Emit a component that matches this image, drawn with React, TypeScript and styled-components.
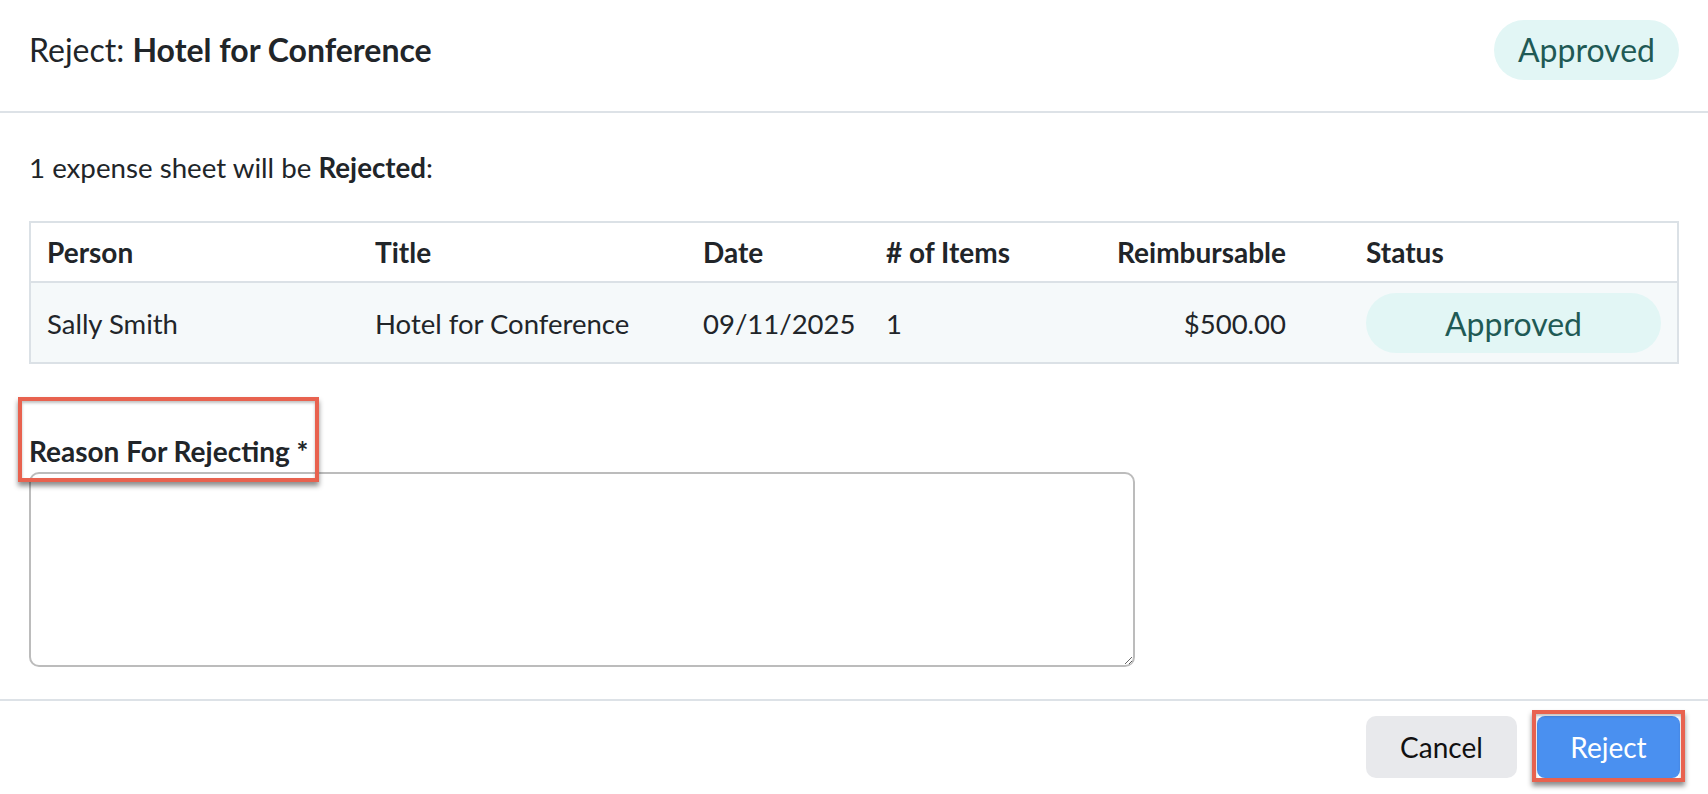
import React from "react";
import styled, { createGlobalStyle } from "styled-components";

const GlobalStyle = createGlobalStyle`
  html, body { margin: 0; padding: 0; background: #ffffff; }
  body {
    font-family: Lato, "Noto Sans", "Liberation Sans", sans-serif;
    color: #212529;
    -webkit-font-smoothing: antialiased;
  }
  * { box-sizing: border-box; }
`;

const Page = styled.div`
  width: 1708px;
  min-height: 794px;
  display: flex;
  flex-direction: column;
  background: #ffffff;
`;

const Header = styled.header`
  height: 113px;
  padding: 0 29px 12px;
  display: flex;
  align-items: center;
  justify-content: space-between;
  border-bottom: 2px solid #dde2e7;
`;

const Title = styled.h1`
  margin: 0;
  font-size: 32px;
  font-weight: 400;
  line-height: 40px;
  color: #212529;
  strong { font-weight: 700; }
`;

const Pill = styled.span<{ $block?: boolean }>`
  display: ${(p) => (p.$block ? "flex" : "inline-flex")};
  align-items: center;
  justify-content: center;
  height: 60px;
  padding: 0 24px;
  border-radius: 30px;
  background: #e2f6f5;
  color: #1f5a55;
  font-size: 32px;
  font-weight: 400;
  width: ${(p) => (p.$block ? "100%" : "auto")};
`;

const Body = styled.main`
  padding: 37px 29px 0;
`;

const Summary = styled.p`
  margin: 0;
  font-size: 27.7px;
  line-height: 36px;
  strong { font-weight: 700; }
`;

const Table = styled.table`
  margin-top: 35px;
  width: 1650px;
  table-layout: fixed;
  border-collapse: separate;
  border-spacing: 0;
  border: 2px solid #dbe1e6;
  font-size: 28px;
`;

const Th = styled.th<{ $align?: string; $pl?: number; $pr?: number }>`
  height: 60px;
  padding: 0 ${(p) => p.$pr ?? 16}px 0 ${(p) => p.$pl ?? 16}px;
  text-align: ${(p) => p.$align ?? "left"};
  font-weight: 700;
  border-bottom: 2px solid #dbe1e6;
  background: #ffffff;
  white-space: nowrap;
`;

const Td = styled.td<{ $align?: string; $pl?: number; $pr?: number }>`
  height: 79px;
  padding: 10px ${(p) => p.$pr ?? 16}px 9px ${(p) => p.$pl ?? 16}px;
  text-align: ${(p) => p.$align ?? "left"};
  background: #f5f9fa;
  white-space: nowrap;
  font-size: 27.5px;
`;

const Field = styled.div`
  margin-top: 69px;
`;

const LabelWrap = styled.div`
  position: relative;
  display: inline-block;
`;

const Label = styled.label`
  display: block;
  font-size: 28px;
  line-height: 36px;
  font-weight: 700;
`;

const Annotation = styled.span<{ $t: number; $r: number; $b: number; $l: number }>`
  position: absolute;
  top: ${(p) => p.$t}px;
  right: ${(p) => p.$r}px;
  bottom: ${(p) => p.$b}px;
  left: ${(p) => p.$l}px;
  border: 4px solid #e8624f;
  box-shadow: 0 4px 5px rgba(0, 0, 0, 0.45), inset 0 2px 3px rgba(0, 0, 0, 0.25);
  pointer-events: none;
`;

const TextArea = styled.textarea`
  display: block;
  margin-top: 3px;
  width: 1106px;
  height: 195px;
  border: 2px solid #bcbcbc;
  border-radius: 10px;
  resize: vertical;
  font-family: inherit;
  font-size: 24px;
  padding: 8px 12px;
  outline: none;
  background: #ffffff;
`;

const Footer = styled.footer`
  margin-top: 32px;
  border-top: 2px solid #dde2e7;
  padding: 15px 28px 14px;
  display: flex;
  justify-content: flex-end;
  align-items: center;
  gap: 20px;
`;

const Button = styled.button<{ $primary?: boolean }>`
  height: 62px;
  width: ${(p) => (p.$primary ? 143 : 151)}px;
  border: none;
  border-radius: ${(p) => (p.$primary ? 8 : 10)}px;
  background: ${(p) => (p.$primary ? "#4a90f0" : "#e8e9ec")};
  color: ${(p) => (p.$primary ? "#ffffff" : "#111111")};
  font-family: inherit;
  font-size: 28px;
  font-weight: 400;
  cursor: pointer;
`;

const ButtonWrap = styled.div`
  position: relative;
  display: inline-flex;
`;

export default function App() {
  return (
    <>
      <GlobalStyle />
      <Page>
        <Header>
          <Title>
            Reject: <strong>Hotel for Conference</strong>
          </Title>
          <Pill>Approved</Pill>
        </Header>
        <Body>
          <Summary>
            1 expense sheet will be <strong>Rejected</strong>:
          </Summary>
          <Table>
            <colgroup>
              <col style={{ width: 328 }} />
              <col style={{ width: 328 }} />
              <col style={{ width: 183 }} />
              <col style={{ width: 160 }} />
              <col style={{ width: 272 }} />
              <col />
            </colgroup>
            <thead>
              <tr>
                <Th>Person</Th>
                <Th>Title</Th>
                <Th>Date</Th>
                <Th># of Items</Th>
                <Th $align="right">Reimbursable</Th>
                <Th $pl={64}>Status</Th>
              </tr>
            </thead>
            <tbody>
              <tr>
                <Td>Sally Smith</Td>
                <Td>Hotel for Conference</Td>
                <Td>09/11/2025</Td>
                <Td>1</Td>
                <Td $align="right">$500.00</Td>
                <Td $pl={64}>
                  <Pill $block>Approved</Pill>
                </Td>
              </tr>
            </tbody>
          </Table>
          <Field>
            <LabelWrap>
              <Label htmlFor="reason">Reason For Rejecting *</Label>
              <Annotation $t={-36} $r={-11} $b={-13} $l={-11} />
            </LabelWrap>
            <TextArea id="reason" />
          </Field>
        </Body>
        <Footer>
          <Button>Cancel</Button>
          <ButtonWrap>
            <Button $primary>Reject</Button>
            <Annotation $t={-6} $r={-5} $b={-4} $l={-5} />
          </ButtonWrap>
        </Footer>
      </Page>
    </>
  );
}
